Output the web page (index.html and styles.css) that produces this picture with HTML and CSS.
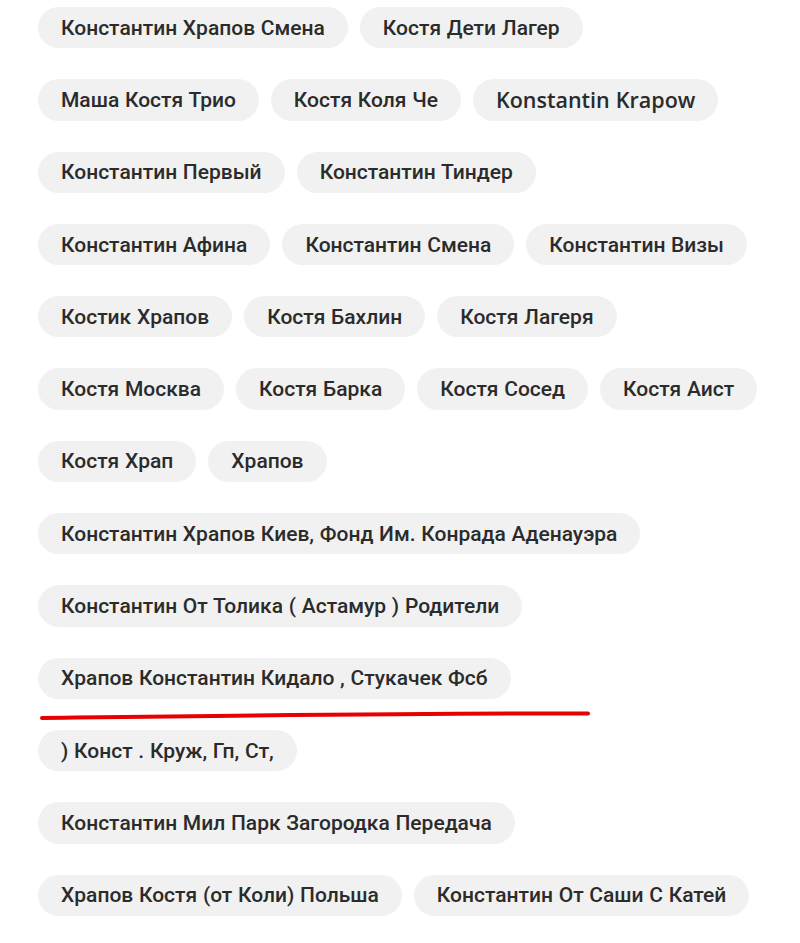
FILE: index.html
```html
<!DOCTYPE html>
<html lang="ru">
<head>
    <meta charset="UTF-8">
    <meta name="viewport" content="width=device-width, initial-scale=1.0">
    <title>Теги</title>
    <link rel="stylesheet" href="styles.css">
</head>
<body>

    <!-- Tags -->
    <div class="tags">
        <span class="tag">Константин Храпов Смена</span>
        <span class="tag">Костя Дети Лагер</span>
        <span class="tag">Маша Костя Трио</span>
        <span class="tag">Костя Коля Че</span>
        <span class="tag tag-latin">Konstantin Krapow</span>
        <span class="tag">Константин Первый</span>
        <span class="tag">Константин Тиндер</span>
        <span class="tag">Константин Афина</span>
        <span class="tag">Константин Смена</span>
        <span class="tag">Константин Визы</span>
        <span class="tag">Костик Храпов</span>
        <span class="tag">Костя Бахлин</span>
        <span class="tag">Костя Лагеря</span>
        <span class="tag">Костя Москва</span>
        <span class="tag">Костя Барка</span>
        <span class="tag">Костя Сосед</span>
        <span class="tag">Костя Аист</span>
        <span class="tag">Костя Храп</span>
        <span class="tag">Храпов</span>
        <span class="tag">Константин Храпов Киев, Фонд Им. Конрада Аденауэра</span>
        <span class="tag">Константин От Толика ( Астамур ) Родители</span>
        <span class="tag">Храпов Константин Кидало , Стукачек Фсб</span>
        <span class="tag">) Конст . Круж, Гп, Ст,</span>
        <span class="tag">Константин Мил Парк Загородка Передача</span>
        <span class="tag">Храпов Костя (от Коли) Польша</span>
        <span class="tag">Константин От Саши С Катей</span>
    </div>

    <!-- Red marker line -->
    <svg class="marker" width="800" height="943" viewBox="0 0 800 943">
        <path d="M42 718 C 200 716, 420 713, 588 713.5" stroke="#e60000" stroke-width="4" fill="none" stroke-linecap="round"/>
    </svg>

</body>
</html>
```
FILE: styles.css
```css
/* General */
body {
    margin: 0;
    background: #ffffff;
    font-family: 'Roboto', 'Liberation Sans', sans-serif;
    position: relative;
}

/* Tag list */
.tags {
    display: flex;
    flex-wrap: wrap;
    column-gap: 12px;
    row-gap: 31px;
    padding: 7px 38px 0 38px;
}

.tag {
    display: inline-flex;
    align-items: center;
    height: 41.3px;
    padding: 0 23px;
    border-radius: 21px;
    background: #f1f1f1;
    color: #2b2b2b;
    font-size: 21px;
    font-weight: 500;
    word-spacing: 0.5px;
    white-space: nowrap;
}

.tag-latin {
    font-family: 'Open Sans', sans-serif;
    font-size: 21.5px;
    font-weight: 600;
}

/* Marker overlay */
.marker {
    position: absolute;
    top: 0;
    left: 0;
    pointer-events: none;
}
```
